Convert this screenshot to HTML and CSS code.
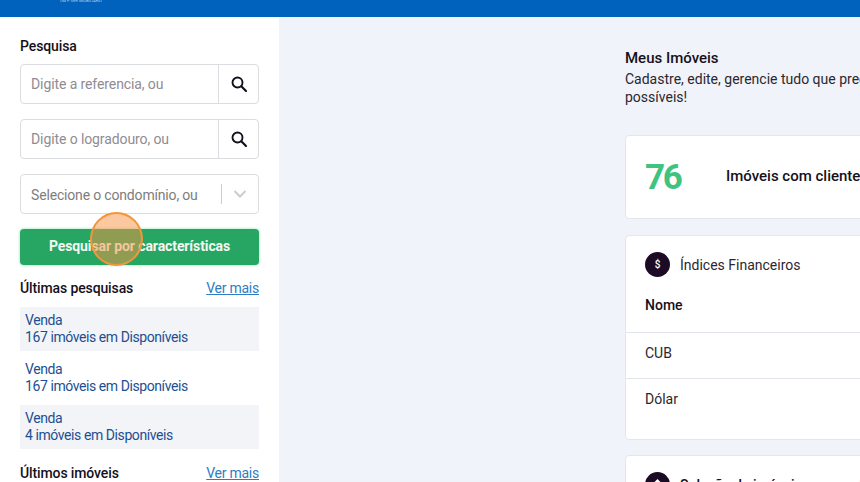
FILE: index.html
```html
<!DOCTYPE html>
<html lang="pt-BR">
<head>
<meta charset="utf-8">
<title>Meus Imóveis</title>
<link rel="stylesheet" href="styles.css">
</head>
<body>
<header class="topbar"><span class="logo-sub">UM P SER IMOBILIÁRIO</span></header>
<div class="page">
  <aside class="sidebar">
    <h2 class="side-title">Pesquisa</h2>
    <div class="field"><span class="field-text">Digite a referencia, ou</span><span class="field-btn"><svg width="18" height="18" viewBox="0 0 18 18"><circle cx="7.5" cy="7.5" r="5" fill="none" stroke="#15101c" stroke-width="1.9"/><path d="M11.3 11.3L16 16" stroke="#15101c" stroke-width="2.2" stroke-linecap="round"/></svg></span></div>
    <div class="field"><span class="field-text">Digite o logradouro, ou</span><span class="field-btn"><svg width="18" height="18" viewBox="0 0 18 18"><circle cx="7.5" cy="7.5" r="5" fill="none" stroke="#15101c" stroke-width="1.9"/><path d="M11.3 11.3L16 16" stroke="#15101c" stroke-width="2.2" stroke-linecap="round"/></svg></span></div>
    <div class="field select"><span class="field-text strong">Selecione o condomínio, ou</span><span class="sep"></span><svg class="chev" width="14" height="10" viewBox="0 0 14 10"><path d="M1.5 2L7 7.5L12.5 2" fill="none" stroke="#cccccc" stroke-width="2"/></svg></div>
    <div class="cta">Pesquisar por características<span class="pulse"></span></div>
    <div class="row-head"><span>Últimas pesquisas</span><a class="more">Ver mais</a></div>
    <ul class="recent">
      <li class="shade">Venda<br>167 imóveis em Disponíveis</li>
      <li>Venda<br>167 imóveis em Disponíveis</li>
      <li class="shade">Venda<br>4 imóveis em Disponíveis</li>
    </ul>
    <div class="row-head last"><span>Últimos imóveis</span><a class="more">Ver mais</a></div>
  </aside>
  <main class="content">
    <h1 class="title">Meus Imóveis</h1>
    <p class="lead">Cadastre, edite, gerencie tudo que precisar para atender da melhor forma possíveis!</p>
    <section class="card stat"><span class="num">76</span><span class="stat-label">Imóveis com clientes</span></section>
    <section class="card fin">
      <div class="card-head"><span class="badge">$</span><span>Índices Financeiros</span></div>
      <div class="th">Nome</div>
      <div class="td">CUB</div>
      <div class="td">Dólar</div>
    </section>
    <section class="card third">
      <div class="card-head"><span class="badge"><svg width="15" height="15" viewBox="0 0 15 15"><path d="M7.5 2L13 7.5H11.5V13H3.5V7.5H2Z" fill="#fff"/></svg></span><span class="dark">Solução de imóveis para captar</span></div>
    </section>
  </main>
</div>
</body>
</html>
```
FILE: styles.css
```css
* { box-sizing: border-box; }
html, body { margin: 0; height: 482px; overflow: hidden; }
body { font-family: Roboto, "Liberation Sans", sans-serif; font-size: 14px; color: #15101c; background: #f0f3f9; }
.topbar { height: 17px; background: #0062bc; position: relative; }
.logo-sub { position: absolute; left: 60px; top: -2px; font-size: 4px; line-height: 5px; color: #b5d0ec; }
.page { display: flex; height: 465px; overflow: hidden; }
.sidebar { width: 279px; flex: none; background: #fff; padding: 20px 20px 0 20px; }
.side-title { margin: 0 0 9px; font-size: 14px; line-height: 18px; font-weight: 500; letter-spacing: -.1px; }
.field { display: flex; align-items: stretch; height: 40px; margin-bottom: 15px; background: #fff; border: 1px solid #dcdde0; border-radius: 4px; }
.field-text { flex: 1; padding-left: 10px; line-height: 38px; font-size: 14px; color: #8f8c92; white-space: nowrap; letter-spacing: -.1px; }
.field-text.strong { color: #7d7d7d; padding-top: 2px; letter-spacing: -.17px; }
.field-btn { width: 40px; border-left: 1px solid #dcdde0; display: flex; align-items: center; justify-content: center; }
.select { align-items: center; margin-bottom: 15px; }
.select .field-text { flex: 1; }
.sep { width: 1px; height: 20px; background: #cccccc; }
.chev { margin: 0 11px; }
.cta { position: relative; height: 36px; margin-bottom: 14px; background: #27a663; border-radius: 4px; box-shadow: 0 0 3px #7fe3ab; color: #f3f8f4; font-weight: 700; font-size: 14px; letter-spacing: -.1px; line-height: 35px; text-align: center; }
.pulse { position: absolute; left: 70px; top: -17px; width: 53px; height: 54px; border-radius: 50%; background: rgba(250, 145, 65, .5); border: 2px solid #f0963c; }
.row-head { display: flex; justify-content: space-between; height: 18px; line-height: 18px; margin-bottom: 10px; font-weight: 500; letter-spacing: -.12px; }
.row-head.last { margin-top: 15px; }
.more { color: #2f7cc4; font-weight: 400; text-decoration: underline; letter-spacing: -.25px; }
.recent { list-style: none; margin: 0; padding: 0; color: #1d4f91; letter-spacing: -.42px; }
.recent li { height: 44px; margin-bottom: 5px; padding: 5px 6px 5px 5px; line-height: 17px; white-space: nowrap; }
.recent li:last-child { margin-bottom: 0; }
.shade { background: #f3f4f7; }
.content { flex: 1; min-width: 0; padding: 32px 0 0 346px; overflow: hidden; }
.title { margin: 0 0 3px; font-size: 15px; line-height: 18px; font-weight: 500; }
.lead { margin: 0 0 29px; width: 490px; line-height: 18px; color: #2b2730; }
.card { width: 500px; background: #fff; border: 1px solid #e3e6ea; border-radius: 4px; }
.stat { height: 84px; margin-bottom: 16px; display: flex; align-items: center; padding-left: 19px; }
.num { width: 81px; font-size: 35px; font-weight: 700; letter-spacing: -2.4px; color: #3fc381; }
.stat-label { margin-bottom: 3px; font-size: 15px; font-weight: 500; white-space: nowrap; }
.fin { height: 205px; margin-bottom: 15px; }
.card-head { display: flex; align-items: center; gap: 10px; height: 25px; margin: 16px 0 0 19px; color: #2b2730; }
.badge { display: flex; align-items: center; justify-content: center; width: 25px; height: 25px; border-radius: 50%; background: #1c0b24; color: #fff; font-size: 10px; font-weight: 500; }
.th { height: 56px; padding: 19px 0 0 19px; line-height: 18px; font-weight: 500; border-bottom: 1px solid #e1e4ea; }
.td { height: 46px; padding: 11px 0 0 19px; line-height: 18px; color: #2b2730; border-bottom: 1px solid #e1e4ea; }
.td:last-child { border-bottom: 0; }
.dark { color: #15101c; font-weight: 500; }
```
